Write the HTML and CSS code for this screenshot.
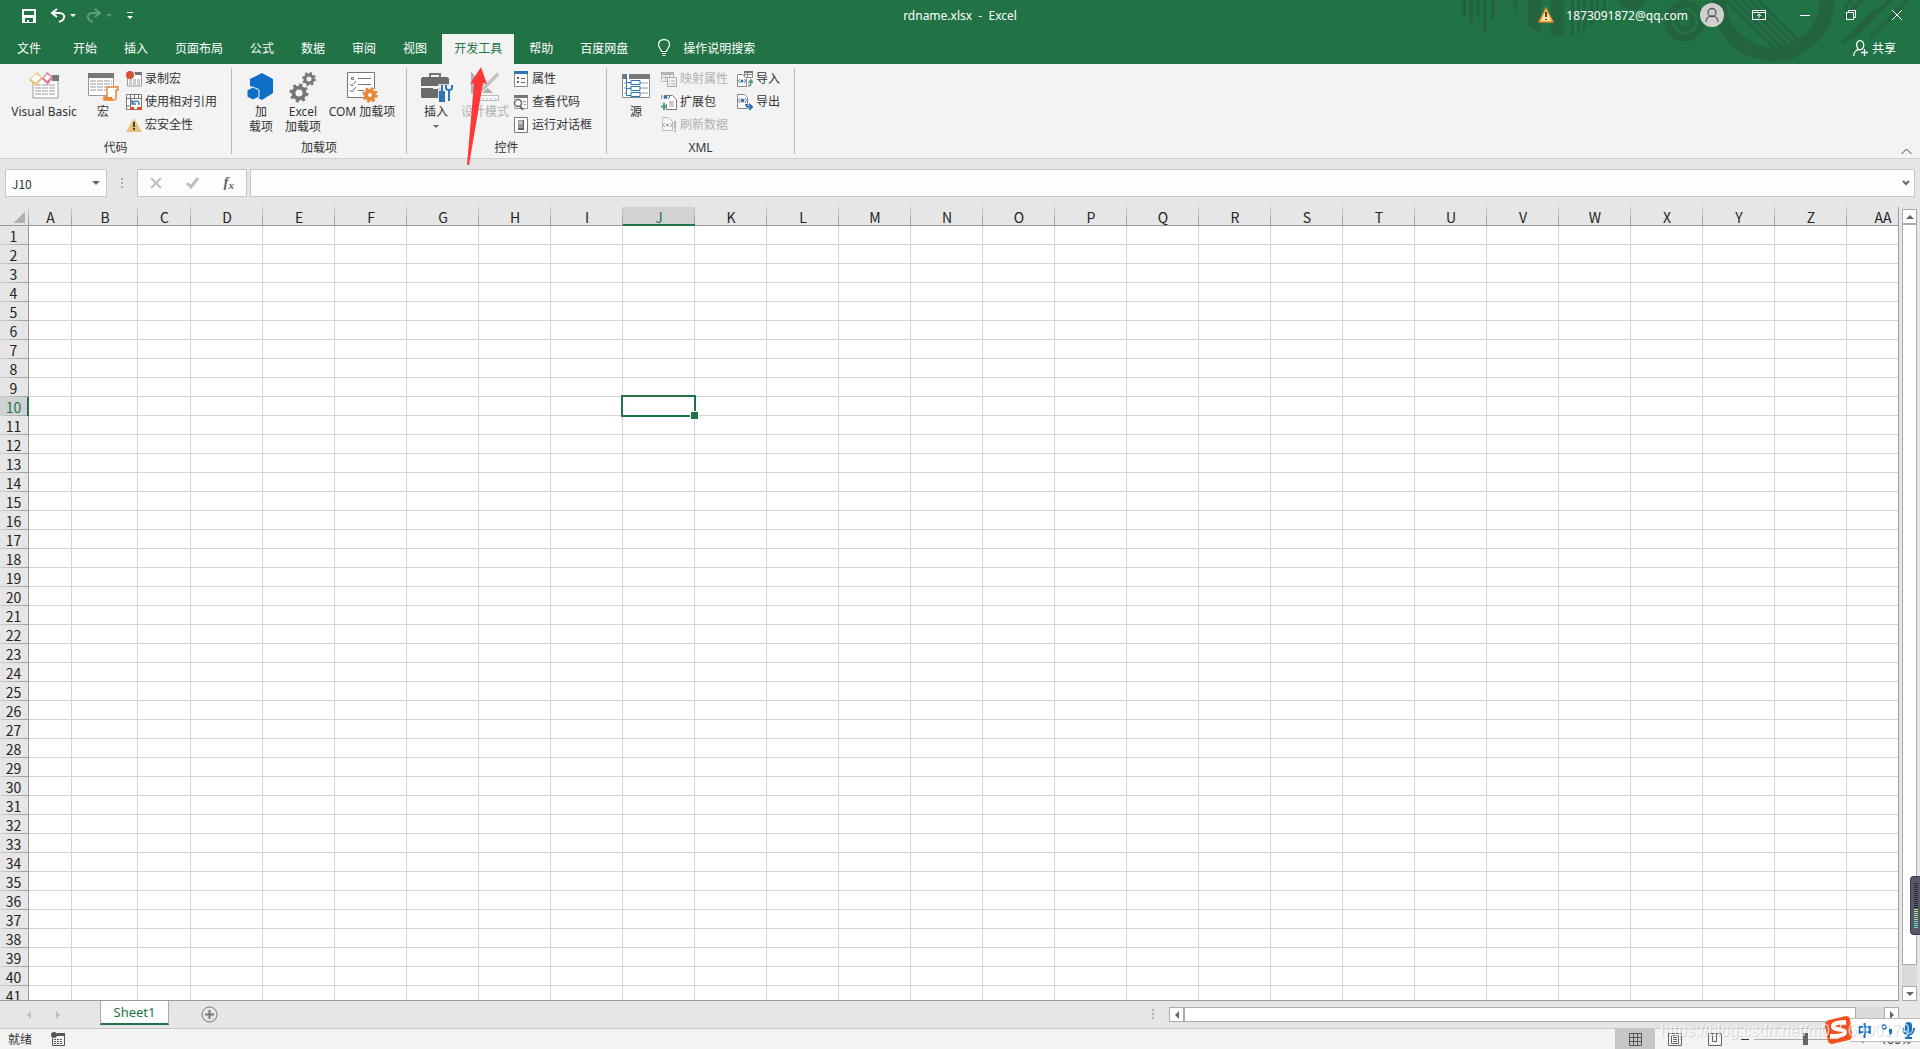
FILE: index.html
```html
<!DOCTYPE html>
<html lang="zh-CN">
<head>
<meta charset="utf-8">
<title>rdname.xlsx - Excel</title>
<link rel="stylesheet" href="styles.css">
</head>
<body>
<div class="app">
  <header class="top">
    <svg class="deco" width="480" height="64" viewBox="0 0 480 64" aria-hidden="true">
      <defs>
        <clipPath id="disc"><circle cx="120" cy="-13" r="50"/></clipPath>
        <clipPath id="hole"><circle cx="333" cy="0" r="48"/></clipPath>
      </defs>
      <g fill="#23633f">
        <path d="M22 0h4v16h-4zM29 0h4v23h-4zM36 0h4v17h-4zM43 0h4v32h-4zM51 0h4v20h-4z"/>
        <path clip-path="url(#disc)" d="M68 0h9v40h-9zM88 0h13v40h-13zM111 0h13v40h-13zM131 0h3v40h-3zM137 0h3v40h-3zM143 0h3v40h-3zM150 0h3v40h-3zM156 0h3v40h-3zM163 0h3v40h-3z"/>
        <circle cx="192" cy="-4" r="14"/>
      </g>
      <g fill="none" stroke="#23633f">
        <circle cx="245" cy="21" r="17" stroke-width="7"/>
        <circle cx="245" cy="21" r="8" stroke-width="5"/>
        <circle cx="333" cy="0" r="54" stroke-width="14"/>
        <path clip-path="url(#hole)" stroke-width="3" d="M286 0l50 50M294 0l50 50M302 0l50 50M310 0l50 50M318 0l50 50"/>
        <path stroke-width="4" d="M404 8l8-8M404 18l18-18M412 38l38-38M402 44l34-34M430 38l38-38"/>
      </g>
    </svg>
    <div class="titlebar">
      <div class="quick">
        <button class="qb save" aria-label="保存"><svg width="16" height="16" viewBox="0 0 16 16"><path fill="#fff" d="M1 1h14v14H1zM3 3v4h10V3zM4 10v4h2v-2h2v2h4v-4z" fill-rule="evenodd"/></svg></button>
        <button class="qb undo" aria-label="撤消"><svg width="26" height="16" viewBox="0 0 26 16"><path d="M7 1L2 5l5 4M2.500 5H9c4 0 6 2 5 5-1 3-3 3-5 4" fill="none" stroke="#fff" stroke-width="2"/><path d="M20 6h6l-3 3z" fill="#fff"/></svg></button>
        <button class="qb redo" aria-label="恢复"><svg width="26" height="16" viewBox="0 0 26 16"><g opacity=".3"><path d="M9 1l5 4-5 4M14 5H7C3 5 1 7 2 10c1 3 3 3 5 4" fill="none" stroke="#fff" stroke-width="2"/><path d="M20 6h6l-3 3z" fill="#fff"/></g></svg></button>
        <button class="qb more" aria-label="自定义快速访问工具栏"><svg width="6" height="8" viewBox="0 0 6 8"><path d="M0 0h6v1H0zM0 4h6L3 7z" fill="#fff"/></svg></button>
      </div>
      <h1 class="doc">rdname.xlsx&nbsp; -&nbsp; Excel</h1>
      <div class="right-side">
        <div class="account">
          <svg width="16" height="16" viewBox="0 0 16 16"><path d="M8 1l7 14H1z" fill="#ffe0a0" stroke="#d9862a" stroke-width="1.500"/><path d="M7 5h2v5H7zM7 12h2v1H7z" fill="#444"/></svg>
          <span class="mail">1873091872@qq.com</span>
          <svg width="24" height="24" viewBox="0 0 24 24"><circle cx="12" cy="12" r="12" fill="#d0cfd0"/><g fill="none" stroke="#555" stroke-width="1.300"><circle cx="12" cy="9.500" r="4"/><path d="M6 19c0-8 12-8 12 0"/></g></svg>
        </div>
        <div class="win">
          <button aria-label="功能区显示选项"><svg width="14" height="12" viewBox="0 0 14 12"><path d="M.5 1.500h13v9H.5zM1 3.500h12M7 9V5M5 7l2-2 2 2" fill="none" stroke="#fff"/></svg></button>
          <button aria-label="最小化"><svg width="10" height="12" viewBox="0 0 10 12"><path d="M0 6h10v1H0z" fill="#fff"/></svg></button>
          <button aria-label="还原"><svg width="10" height="12" viewBox="0 0 10 12"><path d="M.5 3.500h7v7h-7zM2.500 3.500v-2h7v7h-2" fill="none" stroke="#fff"/></svg></button>
          <button aria-label="关闭"><svg width="10" height="12" viewBox="0 0 10 12"><path d="M0 1l10 10M10 1L0 11" fill="none" stroke="#fff"/></svg></button>
        </div>
      </div>
    </div>
    <nav class="tabs">
      <button class="tab file">文件</button>
      <button class="tab">开始</button>
      <button class="tab">插入</button>
      <button class="tab">页面布局</button>
      <button class="tab">公式</button>
      <button class="tab">数据</button>
      <button class="tab">审阅</button>
      <button class="tab">视图</button>
      <button class="tab active">开发工具</button>
      <button class="tab">帮助</button>
      <button class="tab">百度网盘</button>
      <button class="tell"><svg width="12" height="18" viewBox="0 0 12 18"><path d="M3.500 12.500c0-2-3-3.500-3-7 0-6.500 11-6.500 11 0 0 3.500-3 5-3 7zM4 14.500h4M4.500 16.500h3" fill="none" stroke="#fff" stroke-width="1.200"/></svg>操作说明搜索</button>
      <button class="share"><svg width="15" height="17" viewBox="0 0 15 17"><path d="M.7 16c0-3 2-6 5-6.500M8 10c-5 0-6-9-1-9.300C12 .5 12 10 7 9.500M11.500 9v7M8 12.500h7" fill="none" stroke="#fff" stroke-width="1.300"/></svg>共享</button>
    </nav>
  </header>

  <section class="ribbon">
    <div class="group">
      <div class="tools">
        <button class="big vb"><svg width="32" height="32" viewBox="0 0 32 32"><path d="M5 8h25v19H5z" fill="#fff" stroke="#999"/><path d="M24 4h7v6h-7z" fill="#777"/><path d="M7 14h21M7 17h21M7 20h21M7 23h21" stroke="#999" stroke-dasharray="6 1"/><path d="M9 1l6 6-7 8-7-6z" fill="#eac070"/><path d="M8 3l5 3-5 6-5-4z" fill="#fff"/><path d="M19 1l6 5-5 8-6-6z" fill="#e7779a"/><path d="M19 3l4 3-4 4-3-3z" fill="#fff"/></svg>Visual Basic</button>
        <button class="big mac"><svg width="32" height="32" viewBox="0 0 32 32"><path d="M1.500 2.500h25v22h-25z" fill="#fff" stroke="#999"/><path d="M1 2h26v5H1z" fill="#777"/><path d="M3 10h22M3 13h22M3 16h22M3 19h22" stroke="#999" stroke-dasharray="6 1"/><path d="M20 16h11v3h-2v8c0 2-1 2-3 2h-9v-3h3z" fill="#fff" stroke="#e8873a" stroke-width="1.500"/><path d="M17 26h8l1 3h-9z" fill="#e8873a"/></svg>宏</button>
        <div class="small">
          <button><svg width="16" height="16" viewBox="0 0 16 16"><path d="M1.500 4v11h14V1.500H8" fill="#fff" stroke="#999"/><path d="M9 1h7v3H9z" fill="#777"/><path d="M3 9h11M3 11h11M3 13h11" stroke="#999" stroke-dasharray="3 1"/><circle cx="4" cy="4" r="4" fill="#d35230"/></svg>录制宏</button>
          <button><svg width="16" height="16" viewBox="0 0 16 16"><path d="M.5.5h15v15H.5zM0 4.500h16M0 12h4M4.500 0v16M8.500 0v4M12.500 0v4" fill="#fff" stroke="#777"/><path d="M5 5h10v8H5z" fill="#fff"/><path d="M13 11c1-5-4-5-7-2M6 6v4h4" fill="none" stroke="#3f7fc0" stroke-width="1.500"/><path d="M4 13h4v3H4zM11 13h5v3h-5z" fill="#d35230"/></svg>使用相对引用</button>
          <button><svg width="16" height="16" viewBox="0 0 16 16"><path d="M8 1l8 14H0z" fill="#eac07c"/><path d="M7 5h2v5H7zM7 11h2v2H7z" fill="#444"/></svg>宏安全性</button>
        </div>
      </div>
      <div class="label">代码</div>
    </div>
    <div class="sep"></div>
    <div class="group">
      <div class="tools addins">
        <button class="big add"><svg width="32" height="32" viewBox="0 0 32 32"><path d="M17 2l11 6v14l-11 7-4-2v-9l-8-3V8z" fill="#0f6fc6"/><path d="M8 16l6 3v7l-6 3-6-3v-7z" fill="#0f6fc6" stroke="#f3f3f3"/></svg>加<br>载项</button>
        <button class="big xla"><svg width="32" height="32" viewBox="0 0 32 32"><g fill="none" stroke="#777"><circle cx="12" cy="22" r="5.500" stroke-width="4"/><circle cx="12" cy="22" r="8" stroke-width="3" stroke-dasharray="3 3.280"/><circle cx="22" cy="8" r="4" stroke-width="3"/><circle cx="22" cy="8" r="6" stroke-width="2" stroke-dasharray="2.300 2.410"/></g></svg>Excel<br>加载项</button>
        <button class="big com"><svg width="32" height="32" viewBox="0 0 32 32"><path d="M1.500 1.500h27v25h-27z" fill="#fff" stroke="#777"/><path d="M5.500 6.500h2v2h-2zM12 7.500h13M12 13.500h13M12 19.500h7M4 13l2 2 4-5M4 19l2 2 4-5" fill="none" stroke="#777"/><circle cx="24" cy="24" r="7.500" fill="#f3f3f3"/><g fill="none" stroke="#e8873a"><circle cx="24" cy="24" r="4" stroke-width="4"/><circle cx="24" cy="24" r="6.500" stroke-width="2.500" stroke-dasharray="2.600 2.500"/></g></svg>COM 加载项</button>
      </div>
      <div class="label">加载项</div>
    </div>
    <div class="sep"></div>
    <div class="group">
      <div class="tools controls">
        <button class="big ins"><svg width="32" height="32" viewBox="0 0 32 32"><path d="M10 7V3h10v4" fill="none" stroke="#777" stroke-width="2"/><path d="M1 8c0-1 1-2 2-2h24c1 0 2 1 2 2v7H1zM1 17h20v10H2c-1 0-1-1-1-1z" fill="#6b6b6b"/><path d="M13 15h5v3h-5z" fill="#f3f3f3"/><path d="M18 13h14v17H18z" fill="#f3f3f3" opacity=".8"/><path d="M22 14v7M20 21h4v9h-4zM29 18v12" stroke="#2f75b5" stroke-width="2" fill="#2f75b5"/><path d="M26 14v3q0 2 3 2t3-2v-3" stroke="#2f75b5" stroke-width="2" fill="none"/></svg>插入<i class="caret"></i></button>
        <button class="big des" disabled><svg width="32" height="32" viewBox="0 0 32 32"><path d="M2 1v21h22zM7 12l6 6H7z" fill="#b0b0b0" fill-rule="evenodd"/><path d="M28 1l3 3-17 17-5 2 2-5z" fill="#c5c3c5" stroke="#f3f3f3"/><path d="M5.500 24.500h24v5h-24zM10 27v3M14 27v3M18 27v3M22 27v3M26 27v3" fill="#f7f7f7" stroke="#bbb"/></svg>设计模式</button>
        <div class="small">
          <button><svg width="16" height="16" viewBox="0 0 16 16"><path d="M1.500.5h13v15h-13z" fill="#fff" stroke="#888"/><path d="M1 0h14v3H1z" fill="#2f75b5"/><path d="M4 6h2v2H4zM4 10h2v2H4z" fill="#666"/><path d="M8 7.500h4M8 11.500h4" stroke="#666"/></svg>属性</button>
          <button><svg width="16" height="16" viewBox="0 0 16 16"><path d="M1.500 1.500h13v13h-13z" fill="#fff" stroke="#999"/><path d="M1 1h14v3H1z" fill="#777"/><path d="M10 7.500h3M11 10.500h2" stroke="#888"/><circle cx="5" cy="9" r="5" fill="#f3f3f3"/><circle cx="5" cy="9" r="3.500" fill="#fff" stroke="#666" stroke-width="1.500"/><path d="M7 12l3 4" stroke="#666" stroke-width="2"/></svg>查看代码</button>
          <button><svg width="16" height="16" viewBox="0 0 16 16"><path d="M1.500.5h13v15h-13z" fill="#fff" stroke="#777"/><path d="M5 3h6v10H5z" fill="#999"/><path d="M5 11h6v2H5zM10 3h1v10h-1z" fill="#666"/><path d="M6 4h3v3H6z" fill="#ccc"/></svg>运行对话框</button>
        </div>
      </div>
      <div class="label">控件</div>
    </div>
    <div class="sep"></div>
    <div class="group">
      <div class="tools xml">
        <button class="big src"><svg width="32" height="32" viewBox="0 0 32 32"><path d="M2.500 3.500h27v23h-27z" fill="#fff" stroke="#888"/><path d="M2 3h28v5H2z" fill="#777"/><path d="M4 12h24M4 17h24M4 22h24" stroke="#999"/><path d="M6 2h3v24H6z" fill="#fff"/><path d="M6.500 3v21.500H11M6.500 11.500H11M6.500 17.500H11M11 9.500h9v4h-9zM11 15.500h9v4h-9zM11 21.500h9v4h-9z" fill="#fff" stroke="#2f75b5"/></svg>源</button>
        <div class="small">
          <button disabled><svg width="16" height="16" viewBox="0 0 16 16"><path d="M.5 1.500h12v9H.5zM4.500 1v9M8.500 1v9M1 6.500h11" fill="none" stroke="#bbb"/><path d="M0 1h13v3H0z" fill="#b5b5b5"/><path d="M6.500 6.500h9v9h-9z" fill="#f3f3f3" stroke="#aaa"/><path d="M8 10h1M10 10h4M8 13h1M10 13h4" stroke="#aaa"/></svg>映射属性</button>
          <button><svg width="16" height="16" viewBox="0 0 16 16"><path d="M5.500 3V1.500h6l4 4v10h-10V10" fill="#fff" stroke="#777"/><path d="M8 8h5M8 10h5M8 12h5" stroke="#999"/><path d="M1 1L0 3l1 2M7 1l2 2-2 2" fill="none" stroke="#777"/><circle cx="4.500" cy="3" r="2" fill="#2f75b5"/><path d="M3 9v7M0 12.500h6" stroke="#4f9b7c" stroke-width="2"/></svg>扩展包</button>
          <button disabled><svg width="16" height="16" viewBox="0 0 16 16"><path d="M1.500.5h6l4 4v9h-10z" fill="#f7f7f7" stroke="#bbb"/><path d="M4 6L2 8l2 2M9 6l2 2-2 2" fill="none" stroke="#aaa"/><circle cx="6.500" cy="8" r="1.500" fill="#aaa"/><path d="M13 4h2v8h-2zM13 13h2v2h-2z" fill="#b5b5b5"/></svg>刷新数据</button>
        </div>
        <div class="small">
          <button><svg width="16" height="16" viewBox="0 0 16 16"><path d="M7.500.5h8v6h-8zM7 3.500h9M10.500 0v7" fill="#fff" stroke="#888"/><path d="M7 0h9v2H7z" fill="#777"/><path d="M.5 3.500h5l4 4v8h-9z" fill="#fff" stroke="#888"/><path d="M3 8l-1.500 2L3 12M7 8l1.500 2L7 12" fill="none" stroke="#777"/><circle cx="5" cy="10" r="1.500" fill="#2f75b5"/><path d="M11 15c3 0 3-2 3-5M11.500 12L14 9l2.500 3" fill="none" stroke="#4f9b7c" stroke-width="1.500"/></svg>导入</button>
          <button><svg width="16" height="16" viewBox="0 0 16 16"><path d="M.5.500h7l3 3v11H.5z" fill="#fff" stroke="#888"/><path d="M3 4L1.500 6.500 3 9M8 4l1.500 2.500L8 9" fill="none" stroke="#777"/><circle cx="5.500" cy="6.500" r="2" fill="#2f75b5"/><path d="M9 10c0 3 2 3 5 3M12 10l3 3-3 3" fill="none" stroke="#2f75b5" stroke-width="2"/></svg>导出</button>
        </div>
      </div>
      <div class="label">XML</div>
    </div>
    <div class="sep"></div>
    <button class="collapse" aria-label="折叠功能区"><svg width="11" height="7" viewBox="0 0 11 7"><path d="M.5 6l5-5 5 5" fill="none" stroke="#444"/></svg></button>
  </section>

  <section class="formula">
    <div class="namebox"><input aria-label="名称框" value="J10"><i class="caret wide"></i></div>
    <i class="dots"></i>
    <div class="fx">
      <button aria-label="取消"><svg width="12" height="12" viewBox="0 0 12 12"><path d="M1 1l10 10M11 1L1 11" stroke="#bfbfbf" stroke-width="2"/></svg></button>
      <button aria-label="输入"><svg width="13" height="12" viewBox="0 0 13 12"><path d="M1 6l4 4 7-9" fill="none" stroke="#bfbfbf" stroke-width="3"/></svg></button>
      <button class="fn" aria-label="插入函数">f<sub>x</sub></button>
    </div>
    <div class="edit"><input aria-label="编辑栏"><svg width="8" height="6" viewBox="0 0 8 6"><path d="M1 1l3 3 3-3" fill="none" stroke="#666" stroke-width="2"/></svg></div>
  </section>

  <main class="work">
    <div class="sheet">
      <table id="grid" aria-label="工作表"></table>
    </div>
    <div class="vscroll">
      <button aria-label="向上滚动"><i class="up"></i></button>
      <div class="thumb"></div>
      <div class="rest"></div>
      <button aria-label="向下滚动"><i class="down"></i></button>
    </div>
  </main>

  <section class="sheetbar">
    <div class="step"><i class="left"></i><i class="right"></i></div>
    <button class="sheettab">Sheet1</button>
    <button class="plus" aria-label="新工作表"><svg width="17" height="17" viewBox="0 0 17 17"><circle cx="8.500" cy="8.500" r="7.500" fill="none" stroke="#777"/><path d="M8.500 4v9M4 8.500h9" stroke="#777" stroke-width="2"/></svg></button>
    <i class="dots"></i>
    <div class="hscroll">
      <button aria-label="向左滚动"><i class="left"></i></button>
      <div class="thumb"></div>
      <div class="rest"></div>
      <button aria-label="向右滚动"><i class="right"></i></button>
    </div>
  </section>

  <footer class="status">
    <span>就绪</span>
    <svg class="rec" width="14" height="14" viewBox="0 0 14 14"><path d="M1.500 6v7.500h12V3" fill="none" stroke="#555"/><path d="M6 1h8v3H6z" fill="#555"/><path d="M3 7.500h9M3 9.500h9M3 11.500h9" stroke="#555" stroke-dasharray="2 1"/><circle cx="3" cy="3" r="3" fill="#555"/></svg>
    <div class="views">
      <button class="on" aria-label="普通"><svg width="13" height="13" viewBox="0 0 13 13"><path d="M.5.5h12v12H.5zM4.500 0v13M8.500 0v13M0 4.500h13M0 8.500h13" fill="none" stroke="#555"/></svg></button>
      <button aria-label="页面布局"><svg width="14" height="13" viewBox="0 0 14 13"><path d="M.5.5h13v12H.5zM3.500 2.500h7v8h-7zM5 4.500h4M5 6.500h4M5 8.500h4" fill="none" stroke="#666"/></svg></button>
      <button aria-label="分页预览"><svg width="14" height="13" viewBox="0 0 14 13"><path d="M.5.5h13v12H.5zM4.500 1v7.500H9M8.500 1v7.500" fill="none" stroke="#666"/></svg></button>
    </div>
    <div class="zoom">
      <button class="minus" aria-label="缩小"></button>
      <input type="range" min="0" max="100" value="50" aria-label="显示比例">
      <button class="grow" aria-label="放大"><svg width="8" height="8" viewBox="0 0 8 8"><path d="M0 4h8M4 0v8" stroke="#333"/></svg></button>
      <span class="pct">100%</span>
    </div>
  </footer>
</div>

<svg class="pointer" width="26" height="100" viewBox="0 0 26 100" aria-hidden="true"><path d="M16 1l6 17-4-1L4 99H2L9 17l-4 1z" fill="#ff3838"/></svg>

<div class="meter" aria-hidden="true"><i class="idle"></i><i class="busy"></i></div>

<aside class="ime">
  <svg class="logo" width="30" height="30" viewBox="0 0 30 30"><path d="M6 5l17-4q3 0 4 3l2 16q0 4-3 5L9 29q-3 0-4-3L2 10q0-4 4-5z" fill="#f4511e"/><path d="M23 7c-5 0-14 1-13 5 1 3 12 2 12 5 0 4-8 4-15 4" fill="none" stroke="#fff" stroke-width="4"/></svg>
  <button class="lang">中</button>
  <button aria-label="标点"><svg width="12" height="14" viewBox="0 0 12 14"><circle cx="3" cy="4" r="2" fill="none" stroke="#1a73c8" stroke-width="1.500"/><path d="M8 6h3c1 4-1 6-3 7 1-2 1-3 0-4z" fill="#1a73c8"/></svg></button>
  <button aria-label="语音"><svg width="13" height="17" viewBox="0 0 13 17"><rect x="3" y="0" width="7" height="11" rx="3.500" fill="#1a73c8"/><path d="M1 6c0 9 11 9 11 0M6.500 12v4M3 16h7" fill="none" stroke="#1a73c8" stroke-width="2"/></svg></button>
</aside>
<div class="mark">https://blog.csdn.net/m0_56000179</div>
<script src="script.js"></script>
</body>
</html>
```
FILE: styles.css
```css
* { box-sizing: border-box; }
body {
  margin: 0;
  font: 12px/15px "Noto Sans", "Noto Sans CJK SC", sans-serif;
  color: #333;
  overflow: hidden;
}
button, input {
  font: inherit;
  color: inherit;
  border: 0;
  padding: 0;
  margin: 0;
  background: none;
}
svg { display: block; flex: none; }
.app { display: flex; flex-direction: column; height: 100vh; background: #e6e6e6; }

/* title bar and tabs */
.top { position: relative; background: #217346; color: #fff; flex: none; }
.deco { position: absolute; right: 0; top: 0; }
.titlebar { position: relative; display: grid; grid-template-columns: 1fr auto 1fr; height: 30px; align-items: center; }
.quick { display: flex; align-items: center; padding: 2px 0 0 21px; }
.save { margin-right: 13px; }
.undo { margin-right: 10px; }
.redo { margin-right: 15px; }
.doc { margin: 0; font-size: 12px; font-weight: 400; white-space: pre; }
.right-side, .account, .win { display: flex; align-items: center; }
.right-side { justify-content: flex-end; }
.account { gap: 12px; padding-right: 12px; }
.win button { display: flex; justify-content: center; width: 46px; }
.tabs { position: relative; display: flex; align-items: flex-end; gap: 3px; height: 34px; padding-left: 5px; }
.tab { height: 30px; padding: 0 12px 2px; }
.tab.file { margin-right: 5px; }
.tab.active { background: #f3f3f3; color: #217346; }
.tell, .share { display: flex; align-items: center; height: 30px; padding-bottom: 2px; }
.tell { gap: 13px; margin-left: 15px; }
.share { gap: 4px; margin: 0 24px 0 auto; }

/* ribbon */
.ribbon { display: flex; flex: none; height: 95px; background: #f3f3f3; border-bottom: 1px solid #d0d0d0; position: relative; }
.group { display: flex; flex-direction: column; justify-content: space-between; padding: 3px 0; }
.tools { display: flex; padding: 0 14px 0 4px; height: 70px; }
.tools.addins { padding: 0 6px 0 8px; }
.tools.xml { padding: 0 14px 0 10px; }
.tools.xml .small + .small { padding-left: 9px; }
.label { text-align: center; }
.sep { width: 1px; margin: 4px 0; background: #b8b8b8; }
.big { display: flex; flex-direction: column; align-items: center; padding-top: 4px; white-space: nowrap; }
.big svg { margin-bottom: 1px; overflow: visible; }
.vb { width: 80px; }
.mac { width: 38px; }
.add { width: 42px; }
.xla { width: 42px; }
.com { width: 76px; }
.ins { width: 50px; }
.des { width: 48px; }
.src { width: 38px; margin-right: 2px; }
.small { display: flex; flex-direction: column; padding-left: 4px; }
.small button { display: flex; align-items: center; gap: 3px; height: 23px; white-space: nowrap; }
button:disabled { color: #b1b1b1; }
.collapse { position: absolute; right: 8px; bottom: 3px; }
.caret { border: 3px solid transparent; border-top-color: #666; border-bottom: 0; margin-top: 6px; }
.caret.wide { border-width: 4px 4px 0; margin: 0; }

/* formula bar */
.formula { display: flex; align-items: center; flex: none; height: 48px; padding: 0 5px; }
.namebox, .fx, .edit { display: flex; align-items: center; height: 28px; background: #fdfdfd; border: 1px solid #c6c6c6; }
.namebox { width: 102px; padding: 0 6px; justify-content: space-between; }
.namebox input { width: 70px; font-family: "Noto Sans CJK SC", sans-serif; }
.dots { width: 2px; height: 10px; background: repeating-linear-gradient(#b0b0b0 0 2px, transparent 2px 4px); }
.formula .dots { margin: 0 14px; }
.fx { width: 110px; justify-content: space-around; }
.fn { font: italic 700 15px/15px "Liberation Serif", serif; color: #666; }
.fn sub { font-size: 11px; line-height: 11px; vertical-align: -2px; }
.edit { flex: 1; margin-left: 3px; padding-right: 4px; }
.edit input { flex: 1; }

/* grid */
.work { display: flex; flex: 1; min-height: 0; }
.sheet { flex: 1; min-width: 0; overflow: hidden; border-right: 1px solid #999; border-bottom: 1px solid #999; position: relative; }
#grid { table-layout: fixed; width: 1px; border-collapse: separate; border-spacing: 0; background: #fff; font: 14px/18px "Noto Sans CJK SC", sans-serif; color: #222; }
#grid th { font-weight: 400; padding: 0; background: #e6e6e6; height: 19px; white-space: nowrap; }
#grid thead th { border-bottom: 1px solid #999; line-height: 16px; padding-top: 2px; background: linear-gradient(#d0d0d0, #999) right / 1px 100% no-repeat #e6e6e6; }
#grid tbody th { border-right: 1px solid #999; background: linear-gradient(90deg, #d0d0d0, #999) bottom / 100% 1px no-repeat #e6e6e6; padding-right: 1px; }
#grid thead .picked { background-color: #d2d2d2; border-bottom-color: #217346; box-shadow: inset 0 -1px #217346; color: #217346; }
#grid tbody .picked { background-color: #d2d2d2; border-right-color: #217346; box-shadow: inset -1px 0 #217346; color: #217346; }
#grid td { padding: 0; height: 19px; border-right: 1px solid #d4d4d4; border-bottom: 1px solid #d4d4d4; position: relative; }
.corner { display: block; width: 11px; height: 11px; margin-left: 14px; background: linear-gradient(135deg, transparent 50%, #b0b0b0 50%); }
.selection { position: absolute; inset: -2px; border: 2px solid #217346; z-index: 1; }
.selection::after { content: ""; position: absolute; right: -5px; bottom: -5px; width: 7px; height: 7px; background: #217346; border: 1px solid #fff; }
col.head { width: 29px; }
col.a { width: 43px; }
col.b { width: 66px; }
col.c { width: 53px; }
col.std { width: 72px; }

/* scroll bars */
.vscroll { display: flex; flex-direction: column; width: 15px; margin: 2px 3px 0; background: #dadada; }
.vscroll button, .hscroll button { display: flex; align-items: center; justify-content: center; flex: none; width: 15px; height: 15px; background: #fff; border: 1px solid #ababab; }
.thumb { background: #fff; border: 1px solid #ababab; }
.vscroll .thumb { flex: 35 1 0; }
.vscroll .rest { flex: 1 1 0; }
.up, .down { border: 4px solid transparent; }
.up { border-width: 0 4px 4px; border-bottom-color: #666; }
.down { border-width: 4px 4px 0; border-top-color: #666; }
.left, .right { border: 4px solid transparent; }
.left { border-width: 4px 4px 4px 0; border-right-color: #666; }
.right { border-width: 4px 0 4px 4px; border-left-color: #666; }

/* sheet tabs */
.sheetbar { display: flex; flex: none; height: 28px; border-bottom: 1px solid #c6c6c6; padding-right: 21px; }
.step { display: flex; align-items: center; gap: 25px; width: 100px; padding-left: 27px; }
.step .left { border-right-color: #c0c0c0; }
.step .right { border-left-color: #c0c0c0; }
.sheettab { width: 69px; height: 24px; background: #fff; border: 1px solid #ababab; border-width: 0 1px 2px; border-bottom-color: #217346; color: #217346; font-size: 13px; }
.plus { margin: 0 auto 0 32px; }
.sheetbar > .dots { margin: 8px 15px 0 0; }
.hscroll { display: flex; flex: 0 0 calc(38% + 8px); margin-top: 6px; height: 15px; background: #dadada; }
.hscroll .thumb { flex: 24 1 0; }
.hscroll .rest { flex: 1 1 0; }

/* status bar */
.status { display: flex; align-items: center; flex: none; height: 20px; padding: 0 9px 0 8px; background: #f3f3f3; }
.rec { margin-left: 19px; }
.views { display: flex; height: 100%; margin-left: auto; }
.views button { display: flex; align-items: center; justify-content: center; width: 40px; }
.views .on { background: #c6c6c6; }
.zoom { display: flex; align-items: center; width: 176px; }
.minus { width: 8px; height: 1px; background: #333; margin: 0 5px 0 6px; }
.zoom input { appearance: none; width: 102px; height: 12px; }
.zoom input::-webkit-slider-runnable-track { height: 12px; background: linear-gradient(#aaa, #aaa) center / 100% 1px no-repeat; }
.zoom input::-webkit-slider-thumb { appearance: none; width: 5px; height: 12px; background: #666; }
.grow { margin-left: 3px; }
.pct { margin-left: auto; }

/* floating layers */
.pointer { position: absolute; left: 465px; top: 66px; }
.meter { position: fixed; right: 0; top: 876px; width: 10px; height: 59px; border-radius: 4px 0 0 4px; background: #555869; border: 1px solid #3a3c48; border-right: 0; padding: 6px 2px 0 3px; }
.idle, .busy { display: block; }
.idle { height: 26px; background: repeating-linear-gradient(#2a2b35 0 1px, transparent 1px 2px); }
.busy { height: 20px; background: repeating-linear-gradient(transparent 0 1px, #555869 1px 2px), linear-gradient(#c8e07a, #5fd9c4); }
.ime { position: fixed; right: 0; bottom: 7px; width: 70px; height: 24px; display: flex; align-items: center; gap: 9px; background: #fff; border: 1px solid #bbb; border-width: 1px 0; }
.logo { margin: 0 -5px 0 -27px; position: relative; z-index: 3; }
.lang { font-size: 15px; font-weight: 700; color: #1a73c8; }
.mark { position: fixed; right: 10px; bottom: 8px; font: 16px/20px "Liberation Sans", sans-serif; color: rgba(255, 255, 255, .7); text-shadow: 1px 1px 1px rgba(0, 0, 0, .15); pointer-events: none; }
```
FILE: script.js
```js
const columns = [..."ABCDEFGHIJKLMNOPQRSTUVWXYZ", "AA"];
const widths = { A: "a", B: "b", C: "c" };
const rowCount = 41;
const active = { column: "J", row: 10 };

const mark = (on) => (on ? ' class="picked"' : "");

let html = '<colgroup><col class="head">';
for (const c of columns) html += `<col class="${widths[c] || "std"}">`;
html += '</colgroup><thead><tr><th><span class="corner"></span></th>';
for (const c of columns) html += `<th scope="col"${mark(c === active.column)}>${c}</th>`;
html += "</tr></thead><tbody>";
for (let r = 1; r <= rowCount; r++) {
  html += `<tr><th scope="row"${mark(r === active.row)}>${r}</th>`;
  for (const c of columns) {
    const here = r === active.row && c === active.column;
    html += here ? '<td><div class="selection"></div></td>' : "<td></td>";
  }
  html += "</tr>";
}
document.getElementById("grid").innerHTML = html + "</tbody>";
```
